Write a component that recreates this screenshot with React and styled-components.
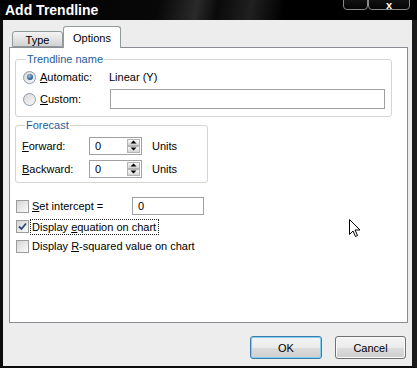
import React from 'react'
import styled, { createGlobalStyle } from 'styled-components'

const GlobalStyle = createGlobalStyle`
  html, body {
    margin: 0;
    padding: 0;
    background: #ededed;
  }
  body {
    font-family: "Liberation Sans", Arial, sans-serif;
    font-size: 11px;
    color: #000;
  }
`

const Window = styled.div`
  width: 417px;
  height: 368px;
  display: flex;
  flex-direction: column;
  position: relative;
  overflow: hidden;
`

const TitleBar = styled.div`
  height: 20px;
  flex: none;
  display: flex;
  justify-content: space-between;
  align-items: flex-start;
  background: linear-gradient(100deg, #000 0%, #080808 38%, #2a2a2a 47%, #0a0a0a 52%, #202020 60%, #000 68%, #000 100%);
`

const Title = styled.div`
  color: #fff;
  font-weight: bold;
  font-size: 14px;
  line-height: 20px;
  padding-left: 5px;
`

const Caption = styled.div`
  display: flex;
  margin-top: -6px;
  margin-right: 7px;
`

const CapButton = styled.div`
  width: ${p => p.$w}px;
  height: 16px;
  box-sizing: border-box;
  border: 1px solid #8a8a8a;
  border-radius: 0 0 4px 4px;
  background: linear-gradient(#1a1a1a, #050505);
  color: #fff;
  font-weight: bold;
  font-size: 11px;
  line-height: 20px;
  text-align: center;
`

const Body = styled.div`
  flex: 1;
  display: flex;
  flex-direction: column;
  background: #ededed;
  border-left: 3px solid #0d0d0d;
  border-right: 5px solid #1b1b1b;
  border-bottom: 2px solid #0c0c0c;
  padding: 6px 4px 0 6px;
`

const TabStrip = styled.div`
  display: flex;
  align-items: flex-end;
  height: 21px;
  padding-left: 3px;
  position: relative;
  z-index: 1;
`

const Tab = styled.div`
  box-sizing: border-box;
  width: ${p => p.$w}px;
  height: ${p => (p.$active ? 22 : 16)}px;
  margin-bottom: ${p => (p.$active ? -1 : 0)}px;
  border: 1px solid #919b9c;
  border-bottom: ${p => (p.$active ? 'none' : '1px solid #919b9c')};
  border-radius: 3px 3px 0 0;
  background: ${p => (p.$active ? '#fff' : 'linear-gradient(#f4f4f4, #d2d2d2)')};
  display: flex;
  justify-content: center;
  align-items: center;
  padding-top: ${p => (p.$active ? 0 : 1)}px;
`

const Panel = styled.div`
  box-sizing: border-box;
  height: 276px;
  background: #fff;
  border: 1px solid #898c95;
  padding: 5px 0 0 5px;
  display: flex;
  flex-direction: column;
  align-items: flex-start;
`

const Group = styled.fieldset`
  box-sizing: border-box;
  width: ${p => p.$w}px;
  margin: ${p => p.$mt || 0}px 0 0 0;
  padding: ${p => p.$pt || 0}px 0 ${p => p.$pb || 0}px ${p => p.$pl || 0}px;
  border: 1px solid #d5d5cf;
  border-radius: 3px;
  min-width: 0;
`

const Legend = styled.legend`
  color: #1f5c99;
  line-height: 13px;
  padding: 0 1px;
  margin-left: 3px;
`

const Row = styled.div`
  display: flex;
  align-items: center;
  height: ${p => p.$h}px;
`

const Radio = styled.span`
  width: 13px;
  height: 13px;
  box-sizing: border-box;
  border-radius: 50%;
  border: 1px solid #8c9aa6;
  background: linear-gradient(135deg, #d6d6d6, #fafafa);
  display: flex;
  justify-content: center;
  align-items: center;
  flex: none;
  &::after {
    content: '';
    display: ${p => (p.$on ? 'block' : 'none')};
    width: 6px;
    height: 6px;
    border-radius: 50%;
    background: radial-gradient(circle at 40% 35%, #9cc0e0, #2a5d92 65%, #1b3f66);
  }
`

const Label = styled.span`
  width: ${p => (p.$w ? `${p.$w}px` : 'auto')};
  margin-left: ${p => p.$ml || 0}px;
  flex: none;
  white-space: nowrap;
`

const Focus = styled.span`
  margin-left: 1px;
  padding: 1px 2px 1px 1px;
  border: 1px dotted #222;
  white-space: nowrap;
`

const TextBox = styled.div`
  box-sizing: border-box;
  width: ${p => p.$w}px;
  height: ${p => p.$h}px;
  border: 1px solid #a0a0a0;
  background: #fff;
  padding-left: 5px;
  display: flex;
  align-items: center;
`

const Spin = styled.div`
  box-sizing: border-box;
  width: 53px;
  height: 18px;
  border: 1px solid #a0a0a0;
  background: #fff;
  display: flex;
  align-items: center;
  justify-content: space-between;
  padding: 1px 1px 1px 5px;
`

const SpinButtons = styled.div`
  display: flex;
  flex-direction: column;
  width: 13px;
  height: 100%;
`

const SpinButton = styled.div`
  flex: 1;
  box-sizing: border-box;
  border: 1px solid #b4b4b4;
  background: linear-gradient(#f8f8f8, #d4d4d4);
  display: flex;
  justify-content: center;
  align-items: center;
`

const Check = styled.span`
  width: 13px;
  height: 13px;
  box-sizing: border-box;
  border: 1px solid #9c9c9c;
  background: linear-gradient(135deg, #d4d4d4, #fbfbfb);
  display: flex;
  justify-content: center;
  align-items: center;
  flex: none;
  margin-left: 1px;
`

const Checks = styled.div`
  margin-top: 13px;
  display: flex;
  flex-direction: column;
`

const Footer = styled.div`
  display: flex;
  justify-content: flex-end;
  gap: 13px;
  padding: 13px 2px 0 0;
`

const Button = styled.div`
  box-sizing: border-box;
  width: ${p => p.$w}px;
  height: 23px;
  border: 1px solid ${p => (p.$default ? '#3d7bad' : '#707070')};
  border-radius: 3px;
  background: linear-gradient(#f4f4f4 0%, #ebebeb 50%, #dcdcdc 52%, #cfcfcf 100%);
  box-shadow: ${p => (p.$default ? 'inset 0 0 0 1px #7fd0f0' : 'inset 0 0 0 1px #fafafa')};
  display: flex;
  justify-content: center;
  align-items: center;
`

const Cursor = styled.svg`
  position: absolute;
  left: 349px;
  top: 219px;
`

const Arrow = ({ up }) => (
  <svg width="7" height="4" viewBox="0 0 7 4">
    <path d={up ? 'M0.5 3.5 L3.5 0.5 L6.5 3.5 Z' : 'M0.5 0.5 L3.5 3.5 L6.5 0.5 Z'} fill="#000" />
  </svg>
)

const Spinner = ({ value }) => (
  <Spin>
    <span>{value}</span>
    <SpinButtons>
      <SpinButton><Arrow up /></SpinButton>
      <SpinButton><Arrow /></SpinButton>
    </SpinButtons>
  </Spin>
)

const CheckMark = () => (
  <svg width="9" height="9" viewBox="0 0 9 9">
    <path d="M1 4.5 L3.5 7 L8 1.5" fill="none" stroke="#2b4a73" strokeWidth="1.8" />
  </svg>
)

export default function App() {
  return (
    <>
      <GlobalStyle />
      <Window>
        <TitleBar>
          <Title>Add Trendline</Title>
          <Caption>
            <CapButton $w={25} />
            <CapButton $w={42}>x</CapButton>
          </Caption>
        </TitleBar>
        <Body>
          <TabStrip>
            <Tab $w={51}>Type</Tab>
            <Tab $w={58} $active>Options</Tab>
          </TabStrip>
          <Panel>
            <Group $w={377} $pl={7} $pb={6}>
              <Legend>Trendline name</Legend>
              <Row $h={22}>
                <Radio $on />
                <Label $ml={4} $w={69}><u>A</u>utomatic:</Label>
                <Label>Linear (Y)</Label>
              </Row>
              <Row $h={22}>
                <Radio />
                <Label $ml={4} $w={70}><u>C</u>ustom:</Label>
                <TextBox $w={275} $h={20} />
              </Row>
            </Group>
            <Group $w={193} $mt={2} $pl={6} $pt={2} $pb={2}>
              <Legend>Forecast</Legend>
              <Row $h={23}>
                <Label $w={67}><u>F</u>orward:</Label>
                <Spinner value="0" />
                <Label $ml={10}>Units</Label>
              </Row>
              <Row $h={23}>
                <Label $w={67}><u>B</u>ackward:</Label>
                <Spinner value="0" />
                <Label $ml={10}>Units</Label>
              </Row>
            </Group>
            <Checks>
              <Row $h={20}>
                <Check />
                <Label $ml={3} $w={100}><u>S</u>et intercept =</Label>
                <TextBox $w={72} $h={18}>0</TextBox>
              </Row>
              <Row $h={21}>
                <Check><CheckMark /></Check>
                <Focus>Display <u>e</u>quation on chart</Focus>
              </Row>
              <Row $h={18}>
                <Check />
                <Label $ml={3}>Display <u>R</u>-squared value on chart</Label>
              </Row>
            </Checks>
          </Panel>
          <Footer>
            <Button $w={72} $default>OK</Button>
            <Button $w={71}>Cancel</Button>
          </Footer>
        </Body>
        <Cursor width="12" height="19" viewBox="0 0 12 19">
          <path d="M0.5 0.5 L0.5 15.5 L4 12 L6.5 17.5 L8.5 16.5 L6 11 L11 11 Z" fill="#fff" stroke="#000" strokeWidth="1" strokeLinejoin="miter" />
        </Cursor>
      </Window>
    </>
  )
}
